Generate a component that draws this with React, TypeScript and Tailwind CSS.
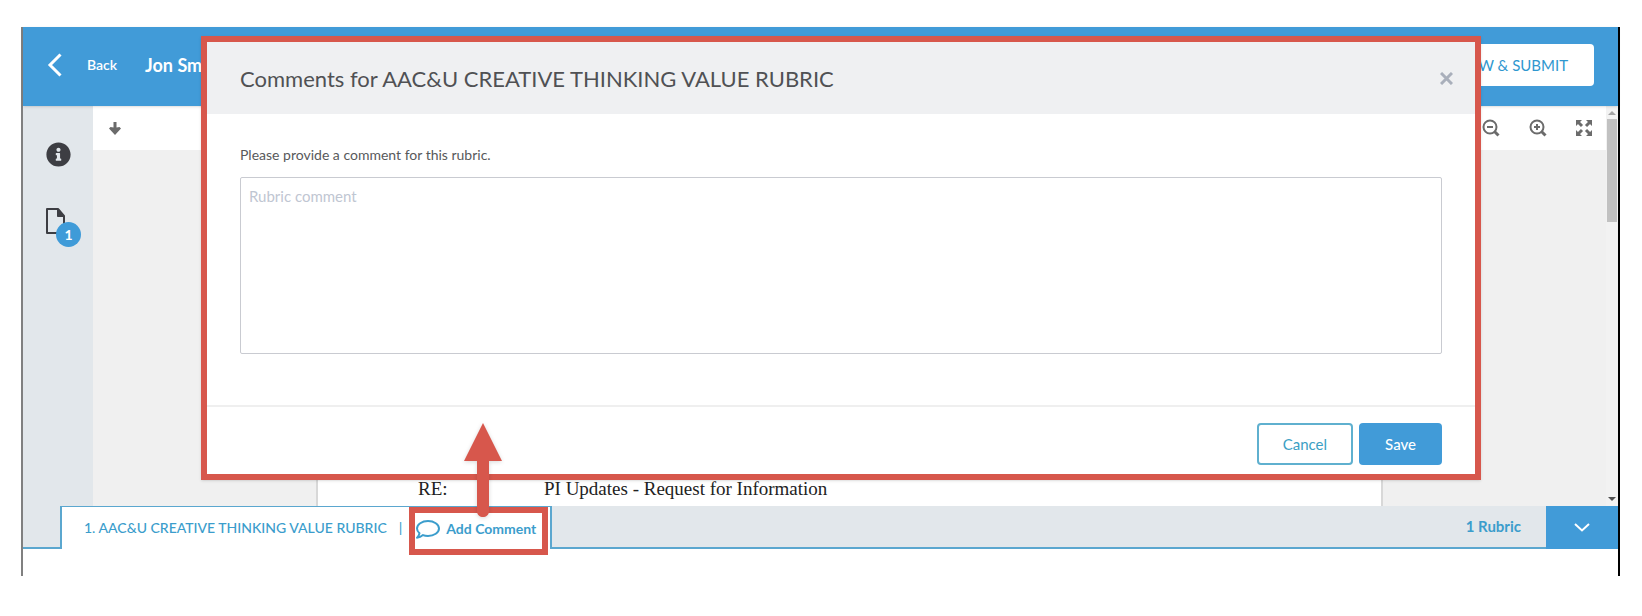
import { FaInfoCircle } from 'react-icons/fa'

function BackIcon() {
    return (
        <svg className="h-6 w-4" viewBox="0 0 16 24" fill="none" stroke="currentColor" strokeWidth="3" aria-hidden="true">
            <path d="M13.5 1.500L3 12L13.5 22.5" />
        </svg>
    )
}

function DownIcon() {
    return (
        <svg className="h-[13px] w-3" viewBox="0 0 12 13" fill="currentColor" aria-hidden="true">
            <path d="M4.500 0H7.500V5.500L10.500 5L12 6.500L6 13L0 6.500L1.500 5L4.500 5.500Z" />
        </svg>
    )
}

function FileIcon() {
    return (
        <svg className="h-[26px] w-5" viewBox="0 0 20 26" fill="none" stroke="currentColor" strokeWidth="2" aria-hidden="true">
            <path d="M1 1H12L18 8V25H1Z" strokeLinejoin="round" />
            <path d="M11.500 1.500V8.500H18Z" fill="currentColor" strokeWidth="1" />
        </svg>
    )
}

function MagnifierIcon({ plus }: { plus?: boolean }) {
    return (
        <svg className="h-[18px] w-[18px]" viewBox="0 0 18 18" fill="none" stroke="currentColor" strokeWidth="2" aria-hidden="true">
            <circle cx="8" cy="8" r="6.5" />
            <path d="M12.5 12.5L16.5 16.5" strokeWidth="3" />
            <path d="M5 8H11" />
            {plus && <path d="M8 5V11" />}
        </svg>
    )
}

function ExpandIcon() {
    return (
        <svg className="h-4 w-4" viewBox="0 0 16 16" fill="currentColor" stroke="currentColor" strokeWidth="3" aria-hidden="true">
            <path d="M2 2L6 6M14 2L10 6M2 14L6 10M14 14L10 10" />
            <path d="M0 0H6L0 6ZM16 0V6L10 0ZM0 16V10L6 16ZM16 16H10L16 10Z" stroke="none" />
        </svg>
    )
}

function CommentIcon() {
    return (
        <svg className="h-[19px] w-6" viewBox="0 0 24 19" fill="none" stroke="currentColor" strokeWidth="2" strokeLinejoin="round" aria-hidden="true">
            <path d="M3.5 13.2C1.9 11.9 1 10.2 1 8.5C1 4.4 5.9 1 12 1S23 4.4 23 8.5S18.100 16 12 16C10.200 16 8.400 15.700 7 15.100C5.500 16.400 3.500 17.500 1 17.700C2.500 16.500 3.300 14.900 3.500 13.200Z" />
        </svg>
    )
}

function ChevronDownIcon() {
    return (
        <svg className="h-[9px] w-4" viewBox="0 0 16 9" fill="none" stroke="currentColor" strokeWidth="2" aria-hidden="true">
            <path d="M1 1L8 7.5L15 1" />
        </svg>
    )
}

function TopBar() {
    return (
        <header className="relative flex h-[79px] items-center bg-[#419bd8] pr-6 pb-[3px] pl-6 text-white shadow-sm">
            <button className="flex items-center gap-6 text-sm font-semibold">
                <BackIcon />
                Back
            </button>
            <h1 className="ml-7 text-lg font-bold">Jon Smith</h1>
            <button className="ml-auto rounded bg-white px-[26px] py-[9px] text-[15px] leading-6 text-[#2f97cf]">REVIEW &amp; SUBMIT</button>
        </header>
    )
}

function Sidebar() {
    return (
        <nav className="flex w-[70px] flex-none flex-col items-start gap-[41px] bg-[#e2e7eb] pt-9 pl-[23px] text-[#3d3e43]">
            <button aria-label="Information">
                <FaInfoCircle className="h-[25px] w-[25px]" />
            </button>
            <button className="relative" aria-label="Files">
                <FileIcon />
                <span className="absolute top-[14px] left-[10px] flex h-[25px] w-[25px] items-center justify-center rounded-full bg-[#3f9bd8] text-sm font-bold text-white">1</span>
            </button>
        </nav>
    )
}

function Viewer() {
    return (
        <div className="flex min-w-0 flex-1 flex-col bg-[#f0f0f0]">
            <div className="flex h-11 items-center bg-white pr-[14px] pl-4 text-[#6b6b6b]">
                <button aria-label="Next page"><DownIcon /></button>
                <div className="ml-auto flex items-center gap-[29px]">
                    <button aria-label="Zoom out"><MagnifierIcon /></button>
                    <button aria-label="Zoom in"><MagnifierIcon plus /></button>
                    <button aria-label="Full screen"><ExpandIcon /></button>
                </div>
            </div>
            <article className="mx-[223px] flex flex-1 items-end border-x-2 border-[#d8d8d8] bg-white pb-[3px] pl-[100px] font-['Liberation_Serif',serif] text-[19px] text-[#222]">
                <span className="w-[126px]">RE:</span>
                <span>PI Updates - Request for Information</span>
            </article>
        </div>
    )
}

function ScrollBar() {
    return (
        <div className="flex w-3 flex-none flex-col items-center bg-[#f2f2f2] py-[5px]">
            <svg className="h-1 w-2" viewBox="0 0 8 4" fill="#a3a3a3" aria-hidden="true"><path d="M4 0L8 4H0Z" /></svg>
            <div className="mt-1 h-[103px] w-[10px] bg-[#c1c1c1]" />
            <svg className="mt-auto h-1 w-2" viewBox="0 0 8 4" fill="#505050" aria-hidden="true"><path d="M0 0H8L4 4Z" /></svg>
        </div>
    )
}

function RubricBar() {
    return (
        <div className="flex h-[43px] bg-[#e2e7eb] text-sm text-[#3b9dcc]">
            <div className="w-[37px] border-b-2 border-[#5ba7cf]" />
            <div className="flex items-center border-x-2 border-t border-[#5ba7cf] bg-white pr-[2px] pl-[22px] font-medium">
                <span>1. AAC&amp;U CREATIVE THINKING VALUE RUBRIC</span>
                <span className="pr-[7px] pl-3">|</span>
                <div className="relative self-start border-[6px] border-[#d7574c]">
                    <button className="flex h-9 items-center gap-[6px] pr-[6px] pb-1 pl-[1px] font-bold whitespace-nowrap">
                        <CommentIcon />
                        Add Comment
                    </button>
                    <svg className="absolute bottom-[32px] left-[49px] z-20 h-[94px] w-[38px] drop-shadow-sm" viewBox="0 0 38 94" fill="#d7574c" aria-hidden="true">
                        <path d="M19 0L38 38H25V88C25 96 13 96 13 88V38H0Z" />
                    </svg>
                </div>
            </div>
            <div className="flex flex-1 items-center justify-end border-b-2 border-[#5ba7cf] pr-[25px] text-[15px] font-bold">1 Rubric</div>
            <button className="flex w-[72px] items-center justify-center bg-[#419bd8] text-white" aria-label="Collapse rubric">
                <ChevronDownIcon />
            </button>
        </div>
    )
}

function CommentDialog() {
    return (
        <div role="dialog" aria-labelledby="dialog-title" className="absolute top-[9px] right-[137px] left-[178px] z-10 border-[6px] border-[#d7574c] bg-white text-[#58595b] shadow-sm">
            <div className="flex h-[72px] items-center justify-between bg-[#eff0f2] pr-[22px] pl-[33px]">
                <h2 id="dialog-title" className="text-[22px] text-[#505154]">Comments for AAC&amp;U CREATIVE THINKING VALUE RUBRIC</h2>
                <button className="text-[#a9afbb]" aria-label="Close">
                    <svg className="h-[13px] w-[13px]" viewBox="0 0 13 13" stroke="currentColor" strokeWidth="3" aria-hidden="true">
                        <path d="M1 1L12 12M12 1L1 12" />
                    </svg>
                </button>
            </div>
            <div className="px-[33px] pt-[31px] pb-[51px]">
                <label htmlFor="rubric-comment" className="block text-sm leading-5">Please provide a comment for this rubric.</label>
                <textarea
                    id="rubric-comment"
                    placeholder="Rubric comment"
                    className="mt-3 block h-[177px] w-full resize-none rounded-xs border border-[#c9cbd1] px-2 py-[6px] text-[15px] leading-6 placeholder:text-[#bfc6d2]"
                />
            </div>
            <div className="flex justify-end gap-[6px] border-t-2 border-[#efefef] px-[33px] pt-4 pb-[9px] text-[15px] leading-6">
                <button className="rounded border-2 border-[#5fb0cf] px-6 py-[7px] text-[#3ba0c4]">Cancel</button>
                <button className="rounded bg-[#419bd8] px-[26px] py-[9px] font-medium text-white">Save</button>
            </div>
        </div>
    )
}

export default function App() {
    return (
        <main className="bg-white pt-[27px] pr-[22px] pb-10 pl-[21px] font-[Lato,sans-serif]">
            <div className="relative border-r-2 border-l-2 border-r-black border-l-[#808080]">
                <TopBar />
                <div className="flex h-[400px]">
                    <Sidebar />
                    <Viewer />
                    <ScrollBar />
                </div>
                <RubricBar />
                <div className="h-[27px]" />
                <CommentDialog />
            </div>
        </main>
    )
}
